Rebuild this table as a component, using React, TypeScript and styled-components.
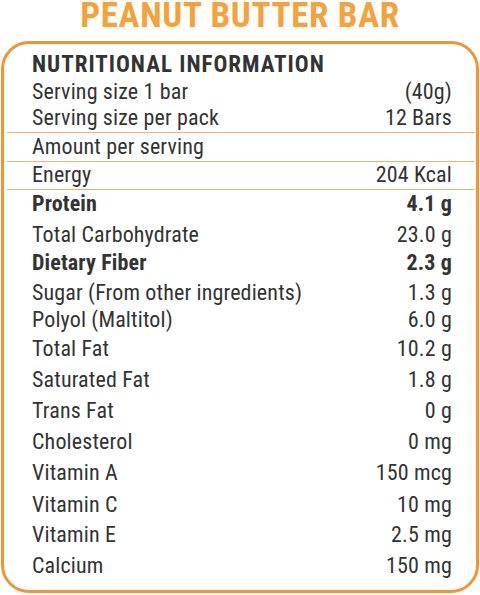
import styled, { createGlobalStyle } from 'styled-components';

const GlobalStyle = createGlobalStyle`
  body {
    margin: 0;
    background: #ffffff;
    font-family: Roboto, "Liberation Sans", sans-serif;
  }
`;

interface Item {
  label: string;
  value?: string;
  h: number;
  bold?: boolean;
  line?: boolean;
}

// h = distance from the previous baseline
const items: Item[] = [
  { label: 'Serving size 1 bar', value: '(40g)', h: 27 },
  { label: 'Serving size per pack', value: '12 Bars', h: 26, line: true },
  { label: 'Amount per serving', h: 29, line: true },
  { label: 'Energy', value: '204 Kcal', h: 28, line: true },
  { label: 'Protein', value: '4.1 g', h: 29, bold: true },
  { label: 'Total Carbohydrate', value: '23.0 g', h: 31 },
  { label: 'Dietary Fiber', value: '2.3 g', h: 28, bold: true },
  { label: 'Sugar (From other ingredients)', value: '1.3 g', h: 30 },
  { label: 'Polyol (Maltitol)', value: '6.0 g', h: 27 },
  { label: 'Total Fat', value: '10.2 g', h: 29 },
  { label: 'Saturated Fat', value: '1.8 g', h: 31 },
  { label: 'Trans Fat', value: '0 g', h: 31 },
  { label: 'Cholesterol', value: '0 mg', h: 31 },
  { label: 'Vitamin A', value: '150 mcg', h: 31 },
  { label: 'Vitamin C', value: '10 mg', h: 32 },
  { label: 'Vitamin E', value: '2.5 mg', h: 30 },
  { label: 'Calcium', value: '150 mg', h: 31 },
];

const Page = styled.div`
  width: 480px;
  height: 595px;
  display: flex;
  flex-direction: column;
  align-items: center;
  overflow: hidden;
`;

const Title = styled.h1`
  margin: 0;
  height: 41px;
  font-size: 35px;
  font-stretch: 85%;
  line-height: 32px;
  font-weight: 700;
  letter-spacing: 0.7px;
  color: #f6a23b;
`;

const Panel = styled.section`
  box-sizing: border-box;
  width: 478px;
  height: 552px;
  border: 3px solid #f29434;
  border-radius: 28px;
  display: flex;
  flex-direction: column;
  color: #333333;
`;

const Row = styled.div<{ $h: number; $line?: boolean; $bold?: boolean }>`
  box-sizing: border-box;
  height: ${(p) => p.$h}px;
  margin: 0 1px 0 3px;
  padding: 0 23px 3px 25px;
  display: flex;
  align-items: flex-end;
  justify-content: space-between;
  border-bottom: 1px solid ${(p) => (p.$line ? '#f3b272' : 'transparent')};
  font-size: 22px;
  font-stretch: 85%;
  letter-spacing: 0.15px;
  line-height: 1;
  font-weight: ${(p) => (p.$bold ? 700 : 400)};
`;

const Heading = styled(Row)`
  font-size: 23px;
  letter-spacing: 1px;
  font-weight: 700;
  text-transform: uppercase;
`;

const Value = styled.span`
  text-align: right;
`;

export default function App() {
  return (
    <>
      <GlobalStyle />
      <Page>
        <Title>PEANUT BUTTER BAR</Title>
        <Panel>
          <Heading $h={36}>Nutritional Information</Heading>
          {items.map((it) => (
            <Row key={it.label} $h={it.h} $line={it.line} $bold={it.bold}>
              <span>{it.label}</span>
              {it.value && <Value>{it.value}</Value>}
            </Row>
          ))}
        </Panel>
      </Page>
    </>
  );
}
